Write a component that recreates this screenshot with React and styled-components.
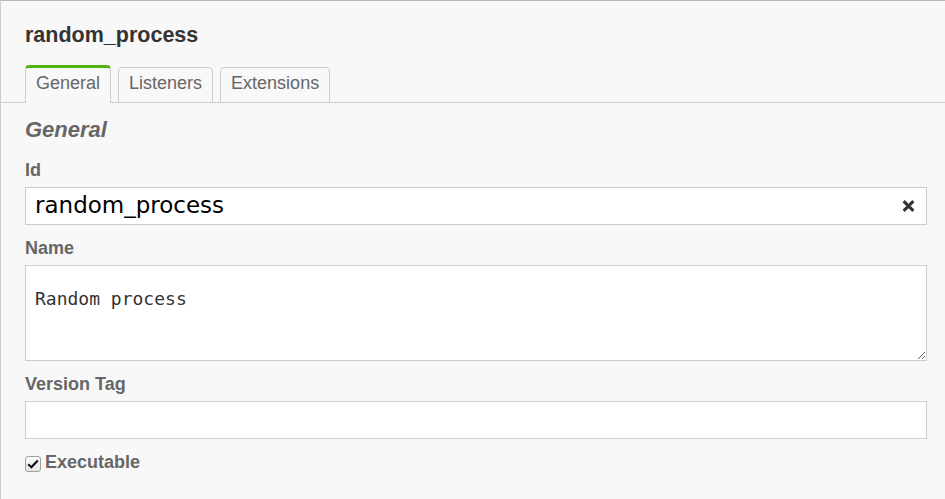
import React from 'react';
import styled, { createGlobalStyle } from 'styled-components';

const GlobalStyle = createGlobalStyle`
  html, body {
    margin: 0;
    padding: 0;
    background: #f8f8f8;
  }
  * {
    box-sizing: border-box;
  }
`;

const Panel = styled.div`
  height: 499px;
  background: #f8f8f8;
  border-top: 1px solid #b9b9b9;
  border-left: 1px solid #cccccc;
  font-family: 'Liberation Sans', Arial, sans-serif;
  color: #666;
  overflow: hidden;
`;

const Header = styled.div`
  padding: 22px 0 0 24px;
`;

const Title = styled.h1`
  margin: 0;
  font-size: 21.5px;
  line-height: 24px;
  font-weight: bold;
  color: #333;
`;

const TabBar = styled.div`
  display: flex;
  align-items: flex-end;
  gap: 7px;
  margin-top: 18px;
  padding-left: 24px;
  border-bottom: 1px solid #cccccc;
`;

const Tab = styled.div`
  position: relative;
  margin-bottom: -1px;
  padding: 0 10px ${(p) => (p.$active ? '5px' : '4px')};
  font-size: 18px;
  line-height: 30px;
  color: #666;
  background: #f8f8f8;
  border: 1px solid #cccccc;
  border-top: ${(p) => (p.$active ? '3px solid #52b415' : '1px solid #cccccc')};
  border-bottom: ${(p) => (p.$active ? 'none' : '1px solid #cccccc')};
  border-radius: 4px 4px 0 0;
`;

const Body = styled.div`
  padding: 15px 18px 0 24px;
`;

const GroupLabel = styled.div`
  font-size: 22px;
  line-height: 24px;
  font-weight: bold;
  font-style: italic;
  color: #666;
  margin-bottom: 18px;
`;

const Field = styled.div`
  display: flex;
  flex-direction: column;
  gap: 7px;
  margin-bottom: 13px;
`;

const Label = styled.label`
  font-size: 18px;
  line-height: 20px;
  font-weight: bold;
  color: #666;
`;

const InputWrap = styled.div`
  position: relative;
`;

const TextInput = styled.input`
  display: block;
  width: 100%;
  height: 38px;
  margin: 0;
  padding: 0 36px 3px 9px;
  border: 1px solid #cccccc;
  border-radius: 0;
  background: #fff;
  font-family: 'DejaVu Sans', sans-serif;
  font-size: 23px;
  color: #000;
  outline: none;
`;

const TextArea = styled.textarea`
  display: block;
  width: 100%;
  height: 96px;
  margin: 0;
  padding: 22px 9px 0;
  border: 1px solid #cccccc;
  border-radius: 0;
  background: #fff;
  font-family: 'DejaVu Sans Mono', monospace;
  font-size: 18px;
  color: #333;
  resize: vertical;
  outline: none;
`;

const ClearButton = styled.button`
  position: absolute;
  right: 12px;
  top: 50%;
  transform: translateY(-50%);
  width: 13px;
  height: 13px;
  padding: 0;
  border: none;
  background: none;
  display: flex;
  align-items: center;
  justify-content: center;
  cursor: pointer;
`;

const CheckRow = styled.div`
  display: flex;
  align-items: center;
  gap: 4px;
  margin-top: 13px;
`;

const CheckBox = styled.span`
  width: 16px;
  height: 16px;
  margin-top: 3px;
  border: 1px solid #a0a0a0;
  border-radius: 3px;
  background: linear-gradient(#fdfdfd, #e6e6e6);
  display: flex;
  align-items: center;
  justify-content: center;
`;

function ClearIcon() {
  return (
    <svg width="13" height="13" viewBox="0 0 13 13">
      <path d="M1.6 1.6 L11.4 11.4 M11.4 1.6 L1.6 11.4" stroke="#333" strokeWidth="3" strokeLinecap="butt" />
    </svg>
  );
}

function CheckIcon() {
  return (
    <svg width="12" height="10" viewBox="0 0 12 10">
      <path d="M1.2 5.2 L4.4 8.2 L10.8 1.6" fill="none" stroke="#111" strokeWidth="2.2" />
    </svg>
  );
}

export default function App() {
  return (
    <>
      <GlobalStyle />
      <Panel>
        <Header>
          <Title>random_process</Title>
        </Header>
        <TabBar>
          <Tab $active>General</Tab>
          <Tab>Listeners</Tab>
          <Tab>Extensions</Tab>
        </TabBar>
        <Body>
          <GroupLabel>General</GroupLabel>
          <Field>
            <Label>Id</Label>
            <InputWrap>
              <TextInput defaultValue="random_process" />
              <ClearButton aria-label="Clear">
                <ClearIcon />
              </ClearButton>
            </InputWrap>
          </Field>
          <Field>
            <Label>Name</Label>
            <TextArea defaultValue="Random process" />
          </Field>
          <Field>
            <Label>Version Tag</Label>
            <TextInput />
          </Field>
          <CheckRow>
            <CheckBox>
              <CheckIcon />
            </CheckBox>
            <Label>Executable</Label>
          </CheckRow>
        </Body>
      </Panel>
    </>
  );
}
